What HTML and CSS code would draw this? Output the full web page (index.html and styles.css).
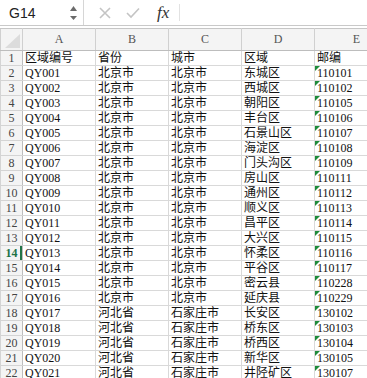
FILE: index.html
```html
<!DOCTYPE html>
<html lang="zh-CN">
<head>
    <meta charset="UTF-8">
    <title>区域编号</title>
    <link rel="stylesheet" href="styles.css">
</head>
<body>
    <div class="formula-bar">
        <div class="name-box">
            <span class="cell-ref">G14</span>
            <span class="spin">
                <svg width="9" height="16" viewBox="0 0 9 16">
                    <path d="M4.5 1 L8 6 L1 6 Z" fill="#6b6b6b"/>
                    <path d="M1 11 L8 11 L4.5 15 Z" fill="#6b6b6b"/>
                </svg>
            </span>
        </div>
        <div class="fb-buttons">
            <svg class="fb-icon" width="12" height="12" viewBox="0 0 12 12">
                <path d="M1 1 L11 11 M11 1 L1 11" stroke="#c4c4c4" stroke-width="1.6"/>
            </svg>
            <svg class="fb-icon" width="14" height="12" viewBox="0 0 14 12">
                <path d="M1 6 L5 10 L13 1.5" stroke="#c4c4c4" stroke-width="1.6" fill="none"/>
            </svg>
            <span class="fx">fx</span>
        </div>
        <div class="fb-input"></div>
    </div>

    <div class="sheet-wrap">
    <table class="sheet">
        <colgroup>
            <col class="c-row">
            <col class="c-col"><col class="c-col"><col class="c-col"><col class="c-col"><col class="c-last">
        </colgroup>
        <thead>
            <tr>
                <th class="corner"><span class="corner-tri"></span></th>
                <th>A</th><th>B</th><th>C</th><th>D</th><th>E</th>
            </tr>
        </thead>
        <tbody>
            <tr><th>1</th><td>区域编号</td><td>省份</td><td>城市</td><td>区域</td><td>邮编</td></tr>
            <tr><th>2</th><td>QY001</td><td>北京市</td><td>北京市</td><td>东城区</td><td class="txt-num">110101</td></tr>
            <tr><th>3</th><td>QY002</td><td>北京市</td><td>北京市</td><td>西城区</td><td class="txt-num">110102</td></tr>
            <tr><th>4</th><td>QY003</td><td>北京市</td><td>北京市</td><td>朝阳区</td><td class="txt-num">110105</td></tr>
            <tr><th>5</th><td>QY004</td><td>北京市</td><td>北京市</td><td>丰台区</td><td class="txt-num">110106</td></tr>
            <tr><th>6</th><td>QY005</td><td>北京市</td><td>北京市</td><td>石景山区</td><td class="txt-num">110107</td></tr>
            <tr><th>7</th><td>QY006</td><td>北京市</td><td>北京市</td><td>海淀区</td><td class="txt-num">110108</td></tr>
            <tr><th>8</th><td>QY007</td><td>北京市</td><td>北京市</td><td>门头沟区</td><td class="txt-num">110109</td></tr>
            <tr><th>9</th><td>QY008</td><td>北京市</td><td>北京市</td><td>房山区</td><td class="txt-num">110111</td></tr>
            <tr><th>10</th><td>QY009</td><td>北京市</td><td>北京市</td><td>通州区</td><td class="txt-num">110112</td></tr>
            <tr><th>11</th><td>QY010</td><td>北京市</td><td>北京市</td><td>顺义区</td><td class="txt-num">110113</td></tr>
            <tr><th>12</th><td>QY011</td><td>北京市</td><td>北京市</td><td>昌平区</td><td class="txt-num">110114</td></tr>
            <tr><th>13</th><td>QY012</td><td>北京市</td><td>北京市</td><td>大兴区</td><td class="txt-num">110115</td></tr>
            <tr class="active"><th>14</th><td>QY013</td><td>北京市</td><td>北京市</td><td>怀柔区</td><td class="txt-num">110116</td></tr>
            <tr><th>15</th><td>QY014</td><td>北京市</td><td>北京市</td><td>平谷区</td><td class="txt-num">110117</td></tr>
            <tr><th>16</th><td>QY015</td><td>北京市</td><td>北京市</td><td>密云县</td><td class="txt-num">110228</td></tr>
            <tr><th>17</th><td>QY016</td><td>北京市</td><td>北京市</td><td>延庆县</td><td class="txt-num">110229</td></tr>
            <tr><th>18</th><td>QY017</td><td>河北省</td><td>石家庄市</td><td>长安区</td><td class="txt-num">130102</td></tr>
            <tr><th>19</th><td>QY018</td><td>河北省</td><td>石家庄市</td><td>桥东区</td><td class="txt-num">130103</td></tr>
            <tr><th>20</th><td>QY019</td><td>河北省</td><td>石家庄市</td><td>桥西区</td><td class="txt-num">130104</td></tr>
            <tr><th>21</th><td>QY020</td><td>河北省</td><td>石家庄市</td><td>新华区</td><td class="txt-num">130105</td></tr>
            <tr><th>22</th><td>QY021</td><td>河北省</td><td>石家庄市</td><td>井陉矿区</td><td class="txt-num">130107</td></tr>
        </tbody>
    </table>
    </div>
</body>
</html>
```

FILE: styles.css
```css
body {
    margin: 0;
    padding: 0;
    background-color: #ffffff;
    overflow: hidden;
    width: 367px;
    height: 378px;
}
.formula-bar {
    display: flex;
    height: 25px;
    border-bottom: 1px solid #c9c9c9;
    margin-bottom: 2px;
    font-family: 'Liberation Sans', Arial, sans-serif;
}
.name-box {
    width: 84px;
    display: flex;
    align-items: center;
    justify-content: space-between;
    padding: 0 5px 0 9px;
    box-sizing: border-box;
    border-right: 1px solid #d6d6d6;
}
.cell-ref {
    font-size: 14px;
    color: #222;
}
.spin {
    display: flex;
    align-items: center;
}
.fb-buttons {
    width: 96px;
    display: flex;
    align-items: center;
    padding-left: 15px;
    box-sizing: border-box;
    border-right: 1px solid #e2e2e2;
    margin: 4px 0;
}
.fb-icon {
    margin-right: 15px;
}
.fx {
    font-family: 'Liberation Serif', serif;
    font-style: italic;
    font-size: 17px;
    color: #333;
    margin-left: 2px;
}
.fb-input {
    flex: 1;
}
.sheet-wrap {
    width: 367px;
    overflow: hidden;
}
.sheet {
    border-collapse: collapse;
    table-layout: fixed;
    width: 398px;
    font-family: 'Liberation Serif', 'Noto Sans CJK SC', serif;
    font-size: 12px;
    color: #111;
}
.c-row {
    width: 22px;
}
.c-col {
    width: 73px;
}
.c-last {
    width: 84px;
}
.sheet thead th {
    height: 21px;
    padding: 0;
    background-color: #f4f4f4;
    border: 1px solid #d0d0d0;
    border-top-color: #c6c6c6;
    border-bottom-color: #bdbdbd;
    font-weight: normal;
    color: #555;
    font-size: 12px;
    text-align: center;
}
.corner {
    position: relative;
}
.corner-tri {
    position: absolute;
    right: 2px;
    bottom: 2px;
    width: 0;
    height: 0;
    border-left: 15px solid transparent;
    border-bottom: 14px solid #dcdcdc;
}
.sheet tbody th {
    height: 14px;
    padding: 0;
    background-color: #f4f4f4;
    border: 1px solid #d4d4d4;
    border-right-color: #bdbdbd;
    font-weight: normal;
    color: #444;
    text-align: center;
    line-height: 14px;
}
.sheet td {
    height: 14px;
    padding: 0 0 0 2px;
    border: 1px solid #d9d9d9;
    line-height: 14px;
    white-space: nowrap;
    overflow: hidden;
}
.sheet tr.active th {
    color: #217346;
    font-weight: bold;
    box-shadow: inset -2px 0 0 #217346;
}
.txt-num {
    position: relative;
}
.txt-num::before {
    content: '';
    position: absolute;
    left: 0;
    top: 0;
    border-top: 5px solid #1e8b3a;
    border-right: 5px solid transparent;
}
```
